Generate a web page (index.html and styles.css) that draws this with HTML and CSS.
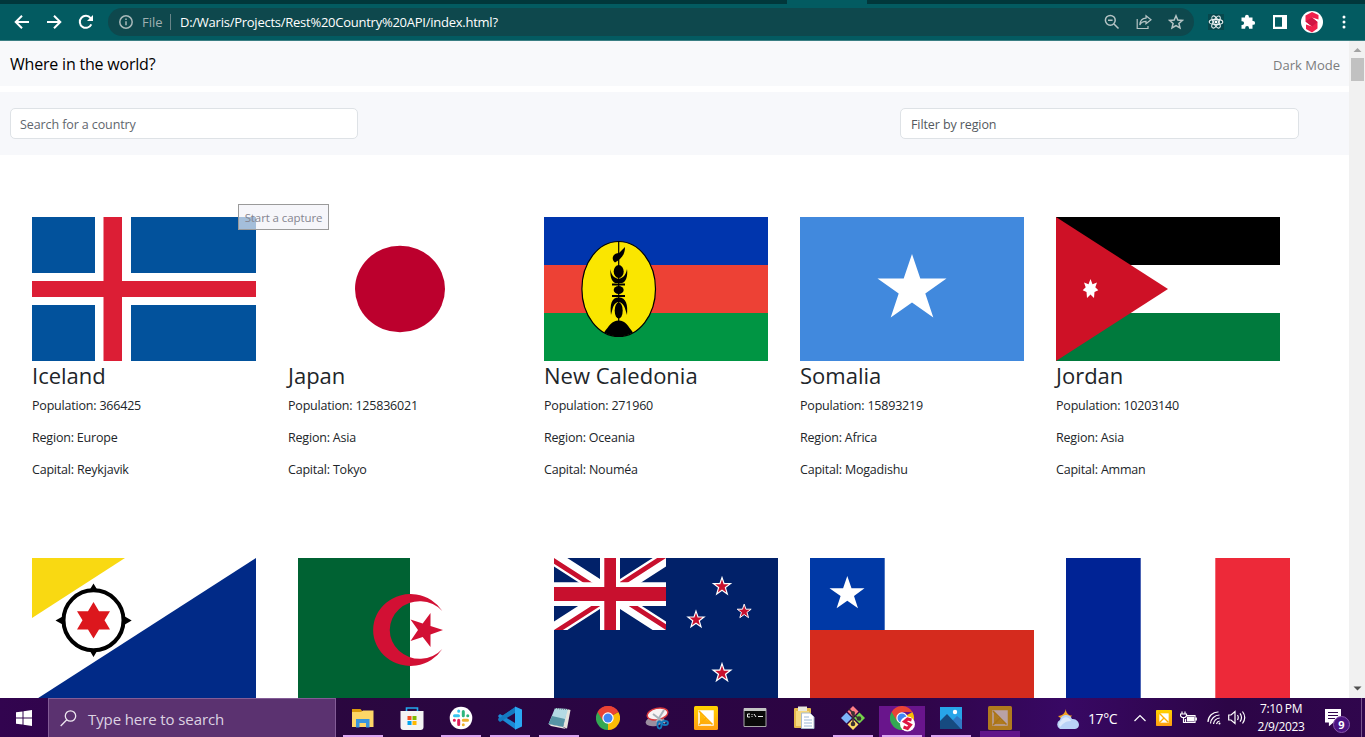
FILE: index.html
```html
<!DOCTYPE html>
<html lang="en">
<head>
<meta charset="utf-8">
<title>Where in the world?</title>
<link rel="stylesheet" href="styles.css">
</head>
<body>
<div class="desktop">
  <div class="tabstrip"><div class="active-tab"></div></div>
  <div class="toolbar">
    <div class="nav">
      <svg width="16" height="16" viewBox="0 0 16 16"><path d="M15 8H2M8 1.700L1.700 8L8 14.300"/></svg>
      <svg width="16" height="16" viewBox="0 0 16 16"><path d="M1 8H14M8 1.700L14.300 8L8 14.300"/></svg>
      <svg width="16" height="16" viewBox="0 0 16 16"><path d="M13.300 10.300A6 6 0 1 1 12.600 4.200"/><path class="solid" d="M15 1V7H9Z"/></svg>
    </div>
    <div class="omnibox">
      <svg class="info" width="14" height="14" viewBox="0 0 14 14"><circle cx="7" cy="7" r="6.200"/><path d="M7 6.200V10.300M7 3.500V5"/></svg>
      <span class="scheme">File</span><i class="sep"></i><span class="url">D:/Waris/Projects/Rest%20Country%20API/index.html?</span>
      <div class="omni-icons">
        <svg width="16" height="16" viewBox="0 0 16 16"><circle cx="6.300" cy="6.300" r="4.900"/><path d="M4 6.300H8.600M10 10L14.500 14.500"/></svg>
        <svg width="16" height="16" viewBox="0 0 16 16"><path d="M1.200 5V14.500H12V12M10 1.800L15 5.800L10 9.800V7.400C7 7.400 5 8.500 3.800 11C4 7 6.500 4.300 10 4.100Z" stroke-width="1.200"/></svg>
        <svg width="16" height="16" viewBox="0 0 16 16"><path d="M8 1.800L9.800 6L14.400 6.400L10.900 9.400L12 13.900L8 11.500L4 13.900L5.100 9.400L1.600 6.400L6.200 6Z"/></svg>
      </div>
    </div>
    <div class="extensions">
      <svg width="16" height="16" viewBox="0 0 16 16"><rect width="16" height="16" fill="#07484d"/><g fill="none" stroke="#e8f0f0" stroke-width="1.100"><ellipse cx="8" cy="8" rx="6.800" ry="2.600"/><ellipse cx="8" cy="8" rx="6.800" ry="2.600" transform="rotate(60 8 8)"/><ellipse cx="8" cy="8" rx="6.800" ry="2.600" transform="rotate(120 8 8)"/></g><circle cx="8" cy="8" r="1.400" fill="#fff"/></svg>
      <svg width="16" height="16" viewBox="0 0 16 16"><path fill="#fff" d="M1.500 3.500H5V2.800A1.900 1.900 0 0 1 8.900 2.800V3.500H12.500V7H13.200A1.900 1.900 0 0 1 13.200 10.800H12.500V14.800H9V14A1.900 1.900 0 0 0 5.200 14V14.800H1.500V11H2.200A1.900 1.900 0 0 0 2.200 7.200H1.500Z"/></svg>
      <svg width="16" height="16" viewBox="0 0 16 16"><path fill="#fff" fill-rule="evenodd" d="M1 1H15V15H1ZM3 3.300V12.700H10V3.300Z"/></svg>
      <svg width="22" height="22" viewBox="0 0 22 22"><circle cx="11" cy="11" r="11" fill="#fff"/><path fill="#f0204c" d="M4.500 4.500L11 1L17.500 4V8.500L11 6.500L16.500 11V17.500L11 21.500L5 18V13.500L11 15.500L4.500 10.500Z"/><path fill="#d01644" d="M4.500 10.500L11 6.500L16.500 11L11 15.500Z"/></svg>
      <svg width="4" height="16" viewBox="0 0 4 16"><g fill="#fff"><circle cx="2" cy="3" r="1.500"/><circle cx="2" cy="8" r="1.500"/><circle cx="2" cy="13" r="1.500"/></g></svg>
    </div>
  </div>

  <div class="viewport">
    <div class="page">
      <header class="header"><span class="brand">Where in the world?</span><span class="mode">Dark Mode</span></header>
      <section class="filters">
        <div class="field search">Search for a country</div>
        <div class="field region">Filter by region</div>
      </section>
      <main class="row">
        <article class="card">
          <svg class="flag" viewBox="0 0 224 144"><rect width="224" height="144" fill="#02529c"/><path d="M0 72H224M81 0V144" stroke="#fff" stroke-width="32" /><path d="M63 0H99V144H63Z" fill="#fff"/><path d="M0 72H224" stroke="#dc1e35" stroke-width="16"/><path d="M71.500 0H90V144H71.500Z" fill="#dc1e35"/></svg>
          <h2>Iceland</h2><p>Population: 366425</p><p>Region: Europe</p><p>Capital: Reykjavik</p>
        </article>
        <article class="card">
          <svg class="flag" viewBox="0 0 224 144"><rect width="224" height="144" fill="#fff"/><ellipse cx="112" cy="72" rx="45" ry="43.300" fill="#bc002d"/></svg>
          <h2>Japan</h2><p>Population: 125836021</p><p>Region: Asia</p><p>Capital: Tokyo</p>
        </article>
        <article class="card">
          <svg class="flag" viewBox="0 0 224 144"><rect width="224" height="144" fill="#0035ad"/><rect y="48" width="224" height="48" fill="#ed4135"/><rect y="96" width="224" height="48" fill="#009543"/><ellipse cx="74.700" cy="72" rx="36.800" ry="47.500" fill="#fae600" stroke="#000" stroke-width="1.200"/><path d="M60 115.500C65 109 68 103.500 74.700 103.500S84 109 89 115.500Q75 123.500 60 115.500Z"/><path d="M74.700 24V104" stroke="#000" stroke-width="1.200"/><path d="M81 30C81 38 77 42 71 45.500C66 41 70 36 75 36Z"/><ellipse cx="74.700" cy="54.500" rx="5" ry="6.500"/><path d="M66.500 52C67 58 70 61 74.700 62C79 61 82 58 83 52C84 59 82 65 78 66H71C67 64 66 58 66.500 52Z"/><path d="M68 66.500H81V68.500H68ZM68 78H81V80H68Z"/><ellipse cx="74.700" cy="73" rx="5" ry="4"/><path d="M67 98C66 88 67 80.500 74.700 80.500S84 88 83 98C81 91 80 86 74.700 85C69 86 69 91 67 98Z"/><ellipse cx="74.700" cy="93.500" rx="4" ry="8"/></svg>
          <h2>New Caledonia</h2><p>Population: 271960</p><p>Region: Oceania</p><p>Capital: Nouméa</p>
        </article>
        <article class="card">
          <svg class="flag" viewBox="0 0 224 144"><rect width="224" height="144" fill="#4189dd"/><path fill="#fff" d="M112 37L120.300 61.500H146.500L125.300 76.500L133.300 100.500L112 85.500L90.700 100.500L98.700 76.500L77.500 61.500H103.700Z"/></svg>
          <h2>Somalia</h2><p>Population: 15893219</p><p>Region: Africa</p><p>Capital: Mogadishu</p>
        </article>
        <article class="card">
          <svg class="flag" viewBox="0 0 224 144"><rect width="224" height="48"/><rect y="48" width="224" height="48" fill="#fff"/><rect y="96" width="224" height="48" fill="#007a3d"/><path d="M0 0L112 72L0 144Z" fill="#ce1126"/><path fill="#fff" d="M34.500 62L36.500 67.300L41 65.500L39.300 70.300L42.300 73.300L38.500 75L38 81L34.500 77.500L31 81L30.500 75L26.700 73.300L29.700 70.300L28 65.500L32.500 67.300Z"/></svg>
          <h2>Jordan</h2><p>Population: 10203140</p><p>Region: Asia</p><p>Capital: Amman</p>
        </article>
      </main>
      <div class="row second">
        <svg class="flag wide-gap" viewBox="0 0 224 144"><rect width="224" height="144" fill="#fff"/><path fill="#f9d912" d="M0 0H93L0 60Z"/><path fill="#012a87" d="M224 0V144H0Z"/><circle cx="61.500" cy="62.300" r="30" fill="#fff" stroke="#000" stroke-width="4"/><path d="M61.500 25.500L66 33H57ZM61.500 99L66 91.500H57ZM23.500 62.500L31.500 58V67ZM99.700 62.500L92 58V67Z"/><path fill="#dc171d" d="M61.500 44L67 53.200H78L72.500 62.300L78 71.500H67L61.500 80.500L56 71.500H45L50.500 62.300L45 53.200H56Z"/></svg>
        <svg class="flag" viewBox="0 0 224 144"><rect width="224" height="144" fill="#fff"/><rect width="112" height="144" fill="#006233"/><path fill="#d21034" d="M144.300 53A37.400 36 0 1 0 144.300 91A30 28.800 0 1 1 144.300 53ZM145 72L132.500 76.500V89L124.700 79L112.500 83L120 72L112.500 61.500L124.700 65.500L132.500 55V68Z"/></svg>
        <svg class="flag" viewBox="0 0 224 144"><defs><clipPath id="canton"><path d="M0 0H112V72H0Z"/></clipPath><clipPath id="saltire"><path d="M56 36H112V72ZM56 36V72H0ZM56 36H0V0ZM56 36V0H112Z"/></clipPath><path id="nzstar" d="M0 -9L2.100 -2.800H8.500L3.400 1.100L5.300 7.500L0 3.700L-5.300 7.500L-3.400 1.100L-8.500 -2.800H-2.100Z"/></defs><rect width="224" height="144" fill="#012169"/><g clip-path="url(#canton)"><path d="M0 0L112 72M112 0L0 72" stroke="#fff" stroke-width="14.400"/><path d="M0 0L112 72M112 0L0 72" stroke="#c8102e" stroke-width="9.600" clip-path="url(#saltire)"/><path d="M56 0V72M0 36H112" stroke="#fff" stroke-width="20"/><path d="M0 24.200H112V48H0Z" fill="#fff"/><path d="M50.300 0H62V72H50.300ZM0 29H112V43H0Z" fill="#c8102e"/></g><g fill="#c8102e" stroke="#fff" stroke-width="1.200"><use href="#nzstar" x="168" y="28.500"/><use href="#nzstar" transform="translate(190.200 53.500) scale(.82)"/><use href="#nzstar" transform="translate(142 61.700) scale(.95)"/><use href="#nzstar" transform="translate(168 115) scale(1.040)"/></g></svg>
        <svg class="flag" viewBox="0 0 224 144"><rect width="224" height="144" fill="#fff"/><rect width="74.700" height="72" fill="#0039a6"/><rect y="72" width="224" height="72" fill="#d52b1e"/><path fill="#fff" d="M37.300 18L41.500 30.300H54.500L44 38L48 50.200L37.300 42.700L26.600 50.200L30.600 38L19.500 30.300H33.100Z"/></svg>
        <svg class="flag" viewBox="0 0 224 144"><rect width="224" height="144" fill="#fff"/><rect width="74.700" height="144" fill="#002395"/><rect x="149.300" width="74.700" height="144" fill="#ed2939"/></svg>
      </div>
      <div class="tooltip">Start a capture</div>
    </div>
    <div class="scrollbar">
      <svg width="16" height="17" viewBox="0 0 16 17"><path d="M4.500 11L8.500 7L12.500 11Z" fill="#a3a3a3"/></svg>
      <div class="thumb"></div>
      <svg class="down" width="16" height="17" viewBox="0 0 16 17"><path d="M4.500 5.500L8.500 9.500L12.500 5.500Z" fill="#505050"/></svg>
    </div>
  </div>

  <footer class="taskbar">
    <div class="start"><svg width="16" height="16" viewBox="0 0 16 16"><path fill="#fff" d="M0 2.300L6.500 1.400V7.500H0ZM7.500 1.200L16 0V7.500H7.500ZM0 8.500H6.500V14.600L0 13.700ZM7.500 8.500H16V16L7.500 14.800Z"/></svg></div>
    <div class="searchbox"><svg width="17" height="17" viewBox="0 0 17 17"><circle cx="10.500" cy="6" r="5.200"/><path d="M6.800 9.800L.7 16"/></svg><span>Type here to search</span></div>
    <div class="apps">
      <div class="app open"><svg width="24" height="24" viewBox="0 0 24 24"><path fill="#dc9b0b" d="M1 3H9.500L11.500 5.500V8H1Z"/><path fill="#fed667" d="M1 6H10L12 4.500H22.500V21H1Z"/><path fill="#3895dd" d="M5 13H18.500V21.500H15V17H8.500V21.500H5Z"/></svg></div>
      <div class="app"><svg width="24" height="24" viewBox="0 0 24 24"><path d="M6.500 7V2H17.500V7" fill="none" stroke="#23a9ec" stroke-width="1.600"/><path fill="#f4f4f4" d="M.5 5H23.500V21Q23.500 24 20.500 24H3.500Q.5 24 .5 21Z"/><path fill="#f25022" d="M7.500 10H11.500V14H7.500Z"/><path fill="#7fba00" d="M12.500 10H16.500V14H12.500Z"/><path fill="#00a4ef" d="M7.500 15H11.500V19H7.500Z"/><path fill="#ffb900" d="M12.500 15H16.500V19H12.500Z"/></svg></div>
      <div class="app open"><svg width="24" height="24" viewBox="0 0 24 24"><circle cx="12" cy="12" r="11.300" fill="#fff"/><g fill="none" stroke-width="3" stroke-linecap="round"><path stroke="#36c5f0" d="M5.500 9.700H9.500M9.700 5V5.300"/><path stroke="#2eb67d" d="M14.300 5.500V9.700M18.700 9.700H18.800"/><path stroke="#ecb22e" d="M14.300 14.300H18.500M14.300 18.700V18.800"/><path stroke="#e01e5a" d="M9.700 14.300V18.500M5.300 14.300H5.400"/></g></svg></div>
      <div class="app open"><svg width="24" height="24" viewBox="0 0 24 24"><path d="M17 1.500L2 15L.3 13.500V12.500L2 11Z" fill="#1479c0"/><path fill="#1b8ad5" d="M2 8L.3 9.500V11L17 23V17Z"/><path fill="#1479c0" d="M2 16L.3 14.500V13L17 1V7Z"/><path fill="#2aa8f2" d="M17 .5L24 3.500V20.500L17 23.800Z"/></svg></div>
      <div class="app open"><svg width="24" height="24" viewBox="0 0 24 24"><path fill="#e5e4dc" d="M20 3L23.500 4L20 22.500L16 21Z"/><path fill="#b4dbe4" d="M8 2L21 3L16 21L1.500 18Z"/><path fill="#5795a5" d="M5 10L18 13L16 21L1.500 18Z"/><path fill="#e9e9e2" d="M1.500 18L16 21L19 23L4 20Z"/><path d="M8 2.500L21 3.500" stroke="#526b73" stroke-dasharray="1 1"/></svg></div>
      <div class="app"><svg width="24" height="24" viewBox="0 0 24 24"><path fill="#ea4335" d="M12 12L1.600 6A12 12 0 0 1 22.400 6Z"/><path fill="#34a853" d="M12 12L12 24A12 12 0 0 1 1.600 6Z"/><path fill="#fbbc05" d="M12 12L22.400 6A12 12 0 0 1 12 24Z"/><path fill="#ea4335" d="M1.600 6A12 12 0 0 1 22.400 6H12L7 15Z"/><circle cx="12" cy="12" r="5.700" fill="#fff"/><circle cx="12" cy="12" r="4.500" fill="#4285f4"/></svg></div>
      <div class="app"><svg width="24" height="24" viewBox="0 0 24 24"><ellipse cx="10" cy="15" rx="9.500" ry="5" fill="#9b8ea0" transform="rotate(-12 10 15)"/><ellipse cx="12.500" cy="8" rx="10.500" ry="5.700" fill="#f7f3f4" stroke="#d83a3f" stroke-width="1.400" transform="rotate(-12 12.500 8)"/><path d="M19 4L11.500 16M8 8L20 17" stroke="#a8b1b9" stroke-width="2"/><g fill="none" stroke="#1479bc" stroke-width="1.800"><ellipse cx="14.500" cy="19" rx="2" ry="3.500"/><ellipse cx="20" cy="17" rx="3" ry="2"/></g></svg></div>
      <div class="app"><svg width="24" height="24" viewBox="0 0 24 24"><defs><linearGradient id="amber" x2="0" y2="1"><stop stop-color="#ffd200"/><stop offset="1" stop-color="#ff9e12"/></linearGradient></defs><rect width="24" height="24" rx="1.500" fill="url(#amber)"/><path d="M5 5H19V19H5Z" fill="none" stroke="#fff" stroke-width="1.500"/><path fill="#fff" d="M5 5H19V19L11 12Z"/><path d="M5 5L12 12L5 19M12 12L18.500 18.500" fill="none" stroke="#ffae00" stroke-width="1.500"/></svg></div>
      <div class="app"><svg width="24" height="24" viewBox="0 0 24 24"><path fill="#090909" stroke="#a9a9a9" d="M1 2.500H23V20.500H1Z"/><path fill="#c4c4c4" d="M1 2H23V5H1Z"/><path stroke="#eee" fill="none" d="M7 8H4.500V11H7M9 8V9M9 10V11M11 8L13 11M15 10.500H20"/></svg></div>
      <div class="app"><svg width="24" height="24" viewBox="0 0 24 24"><rect x="2" y="2" width="17" height="20" rx="1" fill="#e5b94c"/><path fill="#e9e9dc" d="M6 .5H15V5H6Z"/><path fill="#f6d97f" d="M4 5H17V20H4Z"/><path fill="#fff" stroke="#a9bacb" d="M9.500 7H18L22 11V22.500H9.500Z"/><path d="M12 11H17M12 14H20M12 17H20M12 20H20" stroke="#9db8d4"/></svg></div>
      <div class="app open"><svg width="24" height="24" viewBox="0 0 24 24"><path fill="#ff7e87" d="M12 0L17.500 5.500L12 11L6.500 5.500Z"/><path fill="#7db4fa" d="M5.500 6.500L11 12L5.500 17.500L0 12Z"/><path fill="#75d34b" d="M18.500 6.500L24 12L18.500 17.500L13 12Z"/><path fill="#ffda65" d="M12 13L17.500 18.500L12 24L6.500 18.500Z"/><path d="M8 3L12 7V18M12 8L18 13" fill="none" stroke="#3d3033" stroke-width="1.500"/><g fill="#3d3033"><circle cx="12" cy="7" r="2"/><circle cx="12" cy="18" r="2.300"/><circle cx="18" cy="12.500" r="2.300"/></g></svg></div>
      <div class="app open current"><svg width="26" height="26" viewBox="0 0 26 26"><path fill="#34a853" d="M12 12V24A12 12 0 0 1 1.600 6Z"/><path fill="#fbbc05" d="M12 12L22.400 6A12 12 0 0 1 12 24Z"/><path fill="#ea4335" d="M1.600 6A12 12 0 0 1 22.400 6H12L7 15Z"/><circle cx="12" cy="12" r="5.700" fill="#fff"/><circle cx="12" cy="12" r="4.500" fill="#4285f4"/><circle cx="17.500" cy="18" r="7.500" fill="#fff"/><path d="M21.500 14L17.500 13L14.500 15.500L20.500 19L17.500 22.500L13.500 21" fill="none" stroke="#df1744" stroke-width="3"/></svg></div>
      <div class="app open"><svg width="24" height="24" viewBox="0 0 24 24"><rect x="1" y="1" width="22" height="22" fill="#27a5e9"/><path fill="#3179c4" d="M23 14L18 10L12 16L14 23H23Z"/><path fill="#164a80" d="M1 15L8 8L22 23H1Z"/><circle cx="16" cy="6" r="2.200" fill="#fff"/></svg></div>
      <div class="app fading"><svg width="24" height="24" viewBox="0 0 24 24"><rect width="24" height="24" rx="1.500" fill="#b07a1e"/><path d="M5 5H19V19H5Z" fill="none" stroke="#b9a2a7" stroke-width="1.500"/><path fill="#b9a2a7" d="M5 5H19V19L11 12Z"/><path d="M5 5L12 12L5 19M12 12L18.500 18.500" fill="none" stroke="#a97317" stroke-width="1.500"/></svg></div>
    </div>
    <div class="tray">
      <svg class="weather" width="25" height="24" viewBox="0 0 25 24"><path fill="#f5a623" d="M11 1C10 7 14 10 17 9.500C15 14 8 15 3 10C8 10 11 6 11 1Z"/><path fill="#b9d3f7" d="M5 23A5 5 0 0 1 5 14C6 8 15 7 17 13C24 12 27 22 20 23Z"/><path fill="#dce9fb" d="M5 21A4 4 0 0 1 6 15C8 10 14 10 16 15C10 15 8 18 5 21Z"/></svg>
      <span class="temp">17°C</span>
      <svg class="chev" width="12" height="8" viewBox="0 0 12 8"><path d="M.5 7L6 1.500L11.500 7"/></svg>
      <svg class="mail" width="16" height="16" viewBox="0 0 24 24"><rect width="24" height="24" rx="1" fill="url(#amber)"/><path fill="#fff" d="M5 5H19V19H5Z"/><path d="M5 5L12 12L5 19M12 12L18.500 18.500" fill="none" stroke="#ffae00" stroke-width="2"/></svg>
      <svg class="power" width="17" height="14" viewBox="0 0 17 14"><path d="M6 4.500H15V11.500H5.500V8M2 .5V2.500M5 .5V2.500M.5 3H6.500V5L5 6.500H2L.5 5ZM3.500 6.500V11.500H6M16.300 6.500V9.500"/><path fill="#fff" d="M7.500 6H13.500V10H7.500Z"/></svg>
      <svg class="wifi" width="14" height="14" viewBox="0 0 14 14"><path d="M1 11A10 10 0 0 1 11.500 1M3.500 12.500A9 9 0 0 1 12.500 4M6.500 13A7 7 0 0 1 12.700 7M9.500 13A4 4 0 0 1 12.700 10"/><circle cx="12.500" cy="12.500" r="1" fill="#fff" stroke="none"/></svg>
      <svg class="volume" width="18" height="15" viewBox="0 0 18 15"><path d="M.7 5H3L7 1.500V13.500L3 10H.7ZM9.500 5Q11 7.500 9.500 10M12 3.300Q15 7.500 12 11.700M14.500 1.500Q19 7.500 14.500 13.500"/></svg>
      <div class="clock"><span>7:10 PM</span><span>2/9/2023</span></div>
      <div class="notes"><svg width="16" height="17" viewBox="0 0 16 17"><path fill="#fff" d="M0 0H16V13H8L4.500 16V13H0Z"/><path d="M3 3.500H13M3 6.500H13M3 9.500H10" stroke="#32084f"/></svg><b class="badge">9</b></div>
      <i class="edge"></i>
    </div>
  </footer>
</div>
</body>
</html>
```
FILE: styles.css
```css
* { box-sizing: border-box; }
body { margin: 0; font-family: "Open Sans", "Noto Sans", sans-serif; font-size: 12.5px; color: #212529; }
svg { display: block; flex: none; }
.desktop { width: 1365px; height: 737px; display: flex; flex-direction: column; overflow: hidden; background: #fff; }

.tabstrip { height: 4px; background: #01373b; padding-left: 787px; flex: none; }
.active-tab { width: 80px; height: 4px; background: #035b61; }
.toolbar { height: 37px; flex: none; background: #035b61; border-bottom: 1px solid #3a7f83; display: flex; align-items: center; padding: 0 18px 0 14px; }
.nav { display: flex; gap: 16px; width: 94px; }
.nav svg { fill: none; stroke: #fff; stroke-width: 2; }
.nav .solid { fill: #fff; stroke: none; }
.omnibox { width: 1086px; height: 28px; border-radius: 14px; background: #0e484d; display: flex; align-items: center; padding: 0 10px 0 11px; }
.info { fill: none; stroke: #a9b9ba; stroke-width: 1.500; }
.scheme { margin-left: 9px; width: 25px; color: #9fb0b2; font-size: 13px; }
.sep { width: 1px; height: 16px; background: #688488; margin: 0 9px 0 3px; }
.url { color: #fff; font-size: 13px; letter-spacing: -0.250px; white-space: nowrap; }
.omni-icons { display: flex; gap: 16px; margin-left: auto; }
.omni-icons svg { fill: none; stroke: #b6c4c5; stroke-width: 1.500; }
.extensions { display: flex; align-items: center; gap: 16px; padding-left: 14px; }
.extensions svg:nth-child(4) { margin: 0 -3px; }
.extensions svg:nth-child(5) { margin-left: 6px; }

.viewport { flex: 1; min-height: 0; display: flex; }
.page { width: 1349px; position: relative; overflow: hidden; }
.header { height: 45px; background: #f8f9fa; background: #f8f9fb; display: flex; align-items: center; justify-content: space-between; padding: 0 9px 0 10px; }
.brand { color: #000; font-size: 16px; letter-spacing: -0.200px; }
.mode { color: #7b7c7d; font-size: 13px; padding-top: 2px; }
.filters { margin-top: 6px; height: 63px; background: #f7f8fb; padding: 16px 50px 16px 10px; display: flex; justify-content: space-between; }
.field { height: 31px; border: 1px solid #dee2e6; border-radius: 5px; background: #fff; padding: 0 9px; line-height: 31px; color: #5f666d; letter-spacing: -0.100px; }
.search { width: 348px; }
.region { width: 399px; padding-left: 10px; color: #54595e; }
.row { display: flex; gap: 32px; margin: 62px 0 0 32px; height: 341px; }
.row.second { margin-top: 0; }
.card { width: 224px; }
.flag { width: 224px; height: 144px; }
.row.second { gap: 32px; }
.wide-gap { margin-right: 10px; }
h2 { margin: 0 0 6px; font-size: 22px; font-weight: 500; line-height: 29px; letter-spacing: 0; }
p { margin: 0; line-height: 19px; height: 32px; letter-spacing: -0.200px; }
.tooltip { position: absolute; left: 238px; top: 163px; width: 91px; height: 26px; border: 1px solid #9a9a9a; background: rgba(242, 242, 248, .68); color: #858590; font-size: 11.500px; line-height: 26px; text-align: center; white-space: nowrap; letter-spacing: -0.100px; }
.scrollbar { width: 16px; background: #f1f1f1; display: flex; flex-direction: column; }
.thumb { width: 13px; height: 23px; margin-left: 2px; background: #c1c1c1; }
.down { margin-top: auto; }

.taskbar { height: 39px; flex: none; background: linear-gradient(90deg, #32044f 0, #2a073f 24%, #2a0543 45%, #2d0443 65%, #380864 78%, #2c0546 90%, #30064d 100%); display: flex; color: #fff; }
.start { width: 48px; padding: 12px 0 0 16px; }
.searchbox { width: 288px; border: 1px solid #835c96; border-bottom: 0; background: #5b3270; display: flex; padding: 11px 0 0 11px; }
.searchbox svg { fill: none; stroke: #eee8f0; stroke-width: 1.300; }
.searchbox span { margin: -3px 0 0 11px; font-size: 15px; line-height: 24px; color: #ddd2e2; letter-spacing: -0.100px; }
.apps { display: flex; padding-left: 2px; gap: 9px; margin-left: 5px; }
.app { width: 40px; padding: 8px 0 0 8px; height: 39px; }
.open { border-bottom: 2px solid #dba5f2; }
.current { background: #69158c; box-shadow: -3px 0 #69158c, 3px 0 #69158c; margin-top: 8px; height: 31px; padding-top: 0; }
.fading { background: linear-gradient(#0000 33px, #61158a 33px); }
.tray { display: flex; flex: 1; position: relative; align-items: center; padding-left: 35px; }
.tray svg { fill: none; stroke: #fff; stroke-width: 1.200; }
.tray .weather, .tray .mail { stroke: none; }
.temp { font-size: 14px; letter-spacing: -0.400px; width: 46px; margin-left: 8px; padding-top: 2px; }
.mail { margin-left: 10px; }
.power { margin-left: 8px; }
.wifi { margin-left: 10px; }
.volume { margin-left: 7px; }
.clock { width: 70px; display: flex; flex-direction: column; text-align: center; font-size: 12px; line-height: 18px; letter-spacing: -0.400px; }
.notes { position: relative; margin-left: 9px; }
.badge { position: absolute; left: 8px; top: 7px; width: 17px; height: 17px; border: 1px solid #8756ab; border-radius: 50%; background: #4b1482; font-size: 11px; line-height: 15px; text-align: center; }
.edge { margin-left: auto; width: 1px; height: 39px; background: #78558b; margin-right: 3px; }
```
